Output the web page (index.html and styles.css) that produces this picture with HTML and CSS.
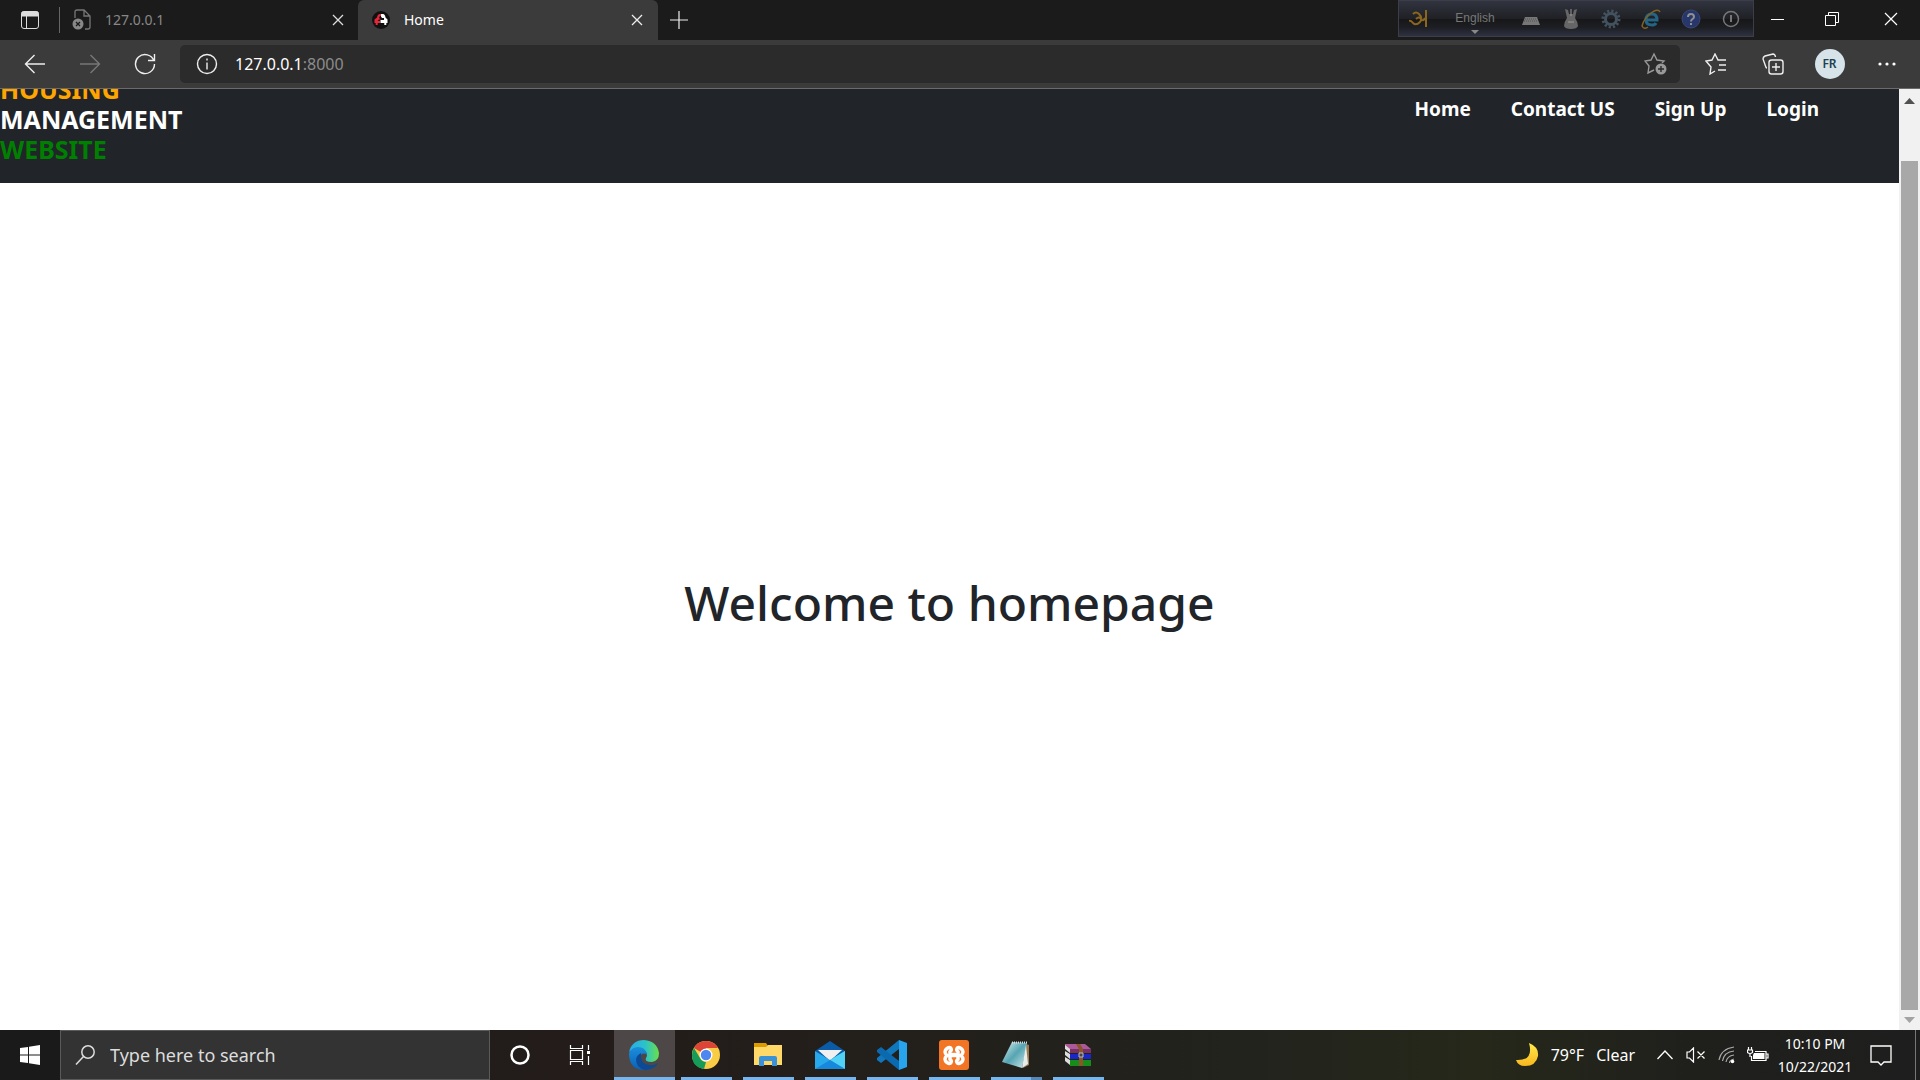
FILE: index.html
```html
<!DOCTYPE html>
<html lang="en">
<head>
<meta charset="utf-8">
<title>Home</title>
<link rel="stylesheet" href="styles.css">
</head>
<body>
<header class="tabstrip">
  <button class="tab-actions" aria-label="Tab actions"><svg width="20" height="20" viewBox="0 0 20 20" fill="none" stroke="#ddd"><rect x="1.5" y="1.5" width="17" height="17" rx="2.500"/><path d="M2 2h16v4H2z" fill="#ddd"/><path d="M6.500 6v12"/></svg></button>
  <div class="tab">
    <svg width="20" height="22" viewBox="0 0 20 22" fill="none" stroke="#777" stroke-width="1.300"><path d="M3 9V3q0-2 2-2h7l6 6v11q0 2-2 2h-3M12 1v6h6"/><circle cx="6" cy="15" r="5.500" fill="#888" stroke="none"/><path d="M4 13l4 4m0-4l-4 4" stroke="#1b1b1b"/></svg>
    <span class="tab-title">127.0.0.1</span>
    <button class="tab-close" aria-label="Close tab"><svg width="12" height="12" viewBox="0 0 12 12" stroke="#ddd" stroke-width="1.300"><path d="M1 1l10 10M11 1L1 11"/></svg></button>
  </div>
  <div class="tab active">
    <svg width="18" height="18" viewBox="0 0 18 18"><circle cx="9" cy="9" r="9" fill="#111"/><path d="M10 3H8Q5.500 3 5 6.500L2.500 8.500V12h1.200v2h2v-2H8v-2H5.500L7 8.500h2L7 7l1-2h2z" fill="#e2283a"/><path d="M9 3h2q2 0 2.500 3.500l2 2V12h-1.200v2h-2v-2H8.500v-3H12V7h-2L9 5.500z" fill="#fff"/></svg>
    <span class="tab-title">Home</span>
    <button class="tab-close" aria-label="Close tab"><svg width="12" height="12" viewBox="0 0 12 12" stroke="#eee" stroke-width="1.300"><path d="M1 1l10 10M11 1L1 11"/></svg></button>
  </div>
  <button class="new-tab" aria-label="New tab"><svg width="18" height="18" viewBox="0 0 18 18" stroke="#eee" stroke-width="1.200"><path d="M0 9h18M9 0v18"/></svg></button>
  <div class="langbar">
    <button aria-label="Keyboard"><svg width="20" height="20" viewBox="0 0 20 20" fill="none" stroke="#8a661e" stroke-width="2"><path d="M4 5q3-3 6 0 4 4 1 8-4 4-7 1-2-3-4-2M7 10q3-3 5 0t4-1M17 1v17"/></svg></button>
    <button class="lang">English<svg width="8" height="4" viewBox="0 0 8 4" fill="#888"><path d="M0 0h8L4 4z"/></svg></button>
    <button aria-label="Layout"><svg width="20" height="20" viewBox="0 0 20 20"><path d="M4 8h12l3 8H1z" fill="#777"/><path d="M4 10h12M3 12h14" stroke="#555" stroke-dasharray="1 1"/></svg></button>
    <button aria-label="Mouse"><svg width="20" height="22" viewBox="0 0 20 22" fill="#666"><path d="M4 1l3 1 1 4h4l1-4 3-1-2 9q3 4 3 8-1 3-7 3t-7-3q0-4 3-8z"/><path d="M10 1v7M7 14h6" stroke="#999"/></svg></button>
    <button aria-label="Settings"><svg width="20" height="20" viewBox="0 0 20 20" fill="none" stroke="#43525f"><circle cx="10" cy="10" r="8" stroke-width="3" stroke-dasharray="2.200 1.990"/><circle cx="10" cy="10" r="5.500" stroke-width="3"/></svg></button>
    <button aria-label="Web"><svg width="20" height="20" viewBox="0 0 20 20" fill="none"><path d="M5 11h11q0-6-5-6-6 0-6 6 0 5 6 5 3 0 4-2" stroke="#246485" stroke-width="3"/><path d="M19 3q-2-4-9 1T1 17q2 4 6 1" stroke="#806224" stroke-width="1.500"/></svg></button>
    <button aria-label="Help"><svg width="20" height="20" viewBox="0 0 20 20" fill="none"><circle cx="10" cy="10" r="9" fill="#27366b" stroke="#3d4870"/><path d="M7 8q0-3 3-3t3 3q0 1-1.500 2T10 12.500M10 14v2" stroke="#909090" stroke-width="2"/></svg></button>
    <button aria-label="Exit"><svg width="18" height="18" viewBox="0 0 18 18" fill="none" stroke="#777" stroke-width="1.500"><circle cx="9" cy="9" r="7.500"/><path d="M9 5v7" stroke-width="2"/></svg></button>
  </div>
  <div class="window-controls">
    <button aria-label="Minimize"><svg width="14" height="14" viewBox="0 0 14 14" stroke="#fff"><path d="M0 7.500h13"/></svg></button>
    <button aria-label="Restore"><svg width="14" height="14" viewBox="0 0 14 14" fill="none" stroke="#fff"><path d="M.5 3.500h10v10H.5zM3.500 3V.5h10v10H11"/></svg></button>
    <button aria-label="Close"><svg width="14" height="14" viewBox="0 0 14 14" stroke="#fff" stroke-width="1.200"><path d="M1 1l12 12M13 1L1 13"/></svg></button>
  </div>
</header>
<div class="toolbar">
  <div class="nav-buttons">
    <button aria-label="Back"><svg width="22" height="20" viewBox="0 0 22 20" fill="none" stroke="#eee" stroke-width="1.400"><path d="M21 10H1.500M10.500 1l-9 9 9 9"/></svg></button>
    <button aria-label="Forward"><svg width="22" height="20" viewBox="0 0 22 20" fill="none" stroke="#777" stroke-width="1.400"><path d="M1 10h19.500M11.500 1l9 9-9 9"/></svg></button>
    <button aria-label="Refresh"><svg width="22" height="22" viewBox="0 0 22 22" fill="none" stroke="#eee" stroke-width="1.400"><path d="M20 8a9.500 9.500 0 1 0 .5 3M20.500 1v6.500H14"/></svg></button>
  </div>
  <div class="address">
    <svg width="22" height="22" viewBox="0 0 22 22" fill="none" stroke="#eee" stroke-width="1.400"><circle cx="11" cy="11" r="9.500"/><path d="M11 9.500v7M11 5.500v2"/></svg>
    <span class="url">127.0.0.1<span class="port">:8000</span></span>
    <button aria-label="Add favorite"><svg width="24" height="24" viewBox="0 0 24 24" fill="none" stroke="#999" stroke-width="1.400"><path d="M10 18l-6 3 1-7-4-5 6-1 3-6 3 6 7 1-2 2"/><circle cx="17" cy="17" r="5.500" fill="#999" stroke="none"/><path d="M17 14v6M14 17h6" stroke="#2b2b2b"/></svg></button>
  </div>
  <div class="toolbar-actions">
    <button aria-label="Favorites"><svg width="22" height="22" viewBox="0 0 22 22" fill="none" stroke="#eee" stroke-width="1.400"><path d="M10 18l-5 3 1-7-5-6 6-1 3-6 3 6h8M14 12h7M13 17h8"/></svg></button>
    <button aria-label="Collections"><svg width="22" height="22" viewBox="0 0 22 22" fill="none" stroke="#eee" stroke-width="1.400"><path d="M5 15q-1 0-1.500-2L1 6q0-2 2-3l8-2q2 0 2.500 3"/><rect x="7" y="7" width="14" height="14" rx="2.500"/><path d="M14 10v8M10 14h8"/></svg></button>
    <button aria-label="Profile"><span class="avatar">FR</span></button>
    <button aria-label="More"><svg width="18" height="4" viewBox="0 0 18 4" fill="#fff"><circle cx="2" cy="2" r="1.600"/><circle cx="9" cy="2" r="1.600"/><circle cx="16" cy="2" r="1.600"/></svg></button>
  </div>
</div>
<div class="viewport">
  <div class="page">
    <nav class="navbar">
      <a class="brand" href="#"><span class="orange">HOUSING</span><span>MANAGEMENT</span><span class="green">WEBSITE</span></a>
      <div class="links"><a href="#">Home</a><a href="#">Contact US</a><a href="#">Sign Up</a><a href="#">Login</a></div>
    </nav>
    <main class="hero"><h1>Welcome to homepage</h1></main>
  </div>
  <div class="scrollbar">
    <svg width="11" height="6" viewBox="0 0 11 6" fill="#505050"><path d="M0 6h11L5.500 0z"/></svg>
    <div class="thumb"></div>
    <svg width="11" height="6" viewBox="0 0 11 6" fill="#a3a3a3"><path d="M0 0h11L5.500 6z"/></svg>
  </div>
</div>
<footer class="taskbar">
  <button class="start" aria-label="Start"><svg width="20" height="20" viewBox="0 0 20 20" fill="#fff"><path d="M0 3l8-1v7.500H0zM9 1.800L20 0v9.500H9zM0 10.500h8V18l-8-1zM9 10.500h11V20L9 18.300z"/></svg></button>
  <label class="search"><svg width="20" height="20" viewBox="0 0 20 20" fill="none" stroke="#ddd" stroke-width="1.500"><circle cx="13" cy="7" r="6.200"/><path d="M8.500 11.500L1 19.500"/></svg><input type="text" placeholder="Type here to search" aria-label="Search"></label>
  <button class="task" aria-label="Cortana"><svg width="20" height="20" viewBox="0 0 20 20" fill="none" stroke="#fff" stroke-width="2.500"><circle cx="10" cy="10" r="8.500"/></svg></button>
  <button class="task" aria-label="Task view"><svg width="22" height="20" viewBox="0 0 22 20" fill="none" stroke="#fff" stroke-width="1.200"><path d="M1.500 0v3.500h12V0M1.500 5.500h12v9h-12zM1.500 20v-3.500h12V20M19.500 0v5M19.500 11v9"/><path d="M18 6h3v3h-3z" fill="#fff" stroke="none"/></svg></button>
  <div class="apps">
    <button class="app current" aria-label="Edge"><svg width="30" height="30" viewBox="0 0 30 30"><defs><linearGradient id="eg"><stop stop-color="#2aa9e8"/><stop offset=".55" stop-color="#2cc3c8"/><stop offset="1" stop-color="#6be048"/></linearGradient><linearGradient id="eb" x2="0" y2="1"><stop stop-color="#1b8fdc"/><stop offset="1" stop-color="#0a61b5"/></linearGradient></defs><path d="M0 12Q3 0 15 0q13 1 15 13 0 8-7 9-8 0-6-4 3-5-3-9-7-3-14 3z" fill="url(#eg)"/><path d="M0 13Q3 7 9 7q7 0 9 7-6-2-7 3-1 9 9 12-3 1-6 1Q0 29 0 13z" fill="url(#eb)"/><path d="M12 13q-1 11 8 12 5 1 9-2-4 7-13 7-9-2-9-11 1-4 5-6z" fill="#0c4a95"/></svg></button>
    <button class="app" aria-label="Chrome"><svg width="28" height="28" viewBox="0 0 28 28"><circle cx="14" cy="14" r="14" fill="#f9cc45"/><path d="M14 14L2 7Q6 0 14 0q8 0 12 7H14z" fill="#db4437"/><path d="M2 7l6 10q2 4 6 4l-2 7Q0 26 0 14q0-4 2-7z" fill="#169b58"/><circle cx="14" cy="14" r="6.500" fill="#fff"/><circle cx="14" cy="14" r="5.200" fill="#4d87ef"/></svg></button>
    <button class="app" aria-label="File Explorer"><svg width="28" height="24" viewBox="0 0 28 24"><path d="M0 0h12l2 3v5H0z" fill="#dd9b00"/><path d="M0 4h12l2-2h14v20H0z" fill="#ffd868"/><path d="M5 23V15q0-2 2-2h14q2 0 2 2v8h-5v-5h-8v5z" fill="#3a91d6"/></svg></button>
    <button class="app" aria-label="Mail"><svg width="30" height="28" viewBox="0 0 30 28"><path d="M0 10L15 0l15 10-7 6H7z" fill="#0b5aa5"/><path d="M3 9h24L15 20z" fill="#f0f0f0"/><path d="M0 10l15 9 15-9v18H0z" fill="#27a9ec"/><path d="M15 19l15-9v18z" fill="#50d2f7"/><path d="M0 28l15-9 15 9z" fill="#1789dc"/></svg></button>
    <button class="app" aria-label="Visual Studio Code"><svg width="30" height="30" viewBox="0 0 30 30"><path d="M22 0v9L4 23l-4-3V18z" fill="#1177bd"/><path d="M0 10l4-3 18 14v9L0 12z" fill="#0b6aaf"/><path d="M22 0l8 3v24l-8 3z" fill="#27a4ec"/></svg></button>
    <button class="app" aria-label="XAMPP"><svg width="30" height="30" viewBox="0 0 30 30" fill="none"><rect width="30" height="30" rx="3" fill="#f27525"/><path d="M8 8.500q3-2 4 0t-1 3v3h8v-3q-2-1-1-3t4 0q4 3 0 7 4 4 0 7-3 2-4 0t1-3v-4h-8v4q2 1 1 3t-4 0q-4-3 0-7-4-4 0-7z" stroke="#fff" stroke-width="3.500" stroke-linejoin="round"/></svg></button>
    <button class="app grouped" aria-label="Notepad"><svg width="28" height="28" viewBox="0 0 28 28"><defs><linearGradient id="np" x2="1" y2="1"><stop stop-color="#e2f1f2"/><stop offset=".5" stop-color="#55a5b2"/><stop offset="1" stop-color="#d4e9ea"/></linearGradient></defs><path d="M24 3l3 1v20l-6 3z" fill="#9a7950"/><path d="M10 1l15 1-5 25L0 21z" fill="url(#np)"/><path d="M24 4l2 19-6 4z" fill="#e6eeea"/><path d="M10 1.500h15" stroke="#ddd" stroke-width="2" stroke-dasharray="1 1"/></svg></button>
    <button class="app" aria-label="WinRAR"><svg width="28" height="24" viewBox="0 0 28 24"><path d="M1 1h20l6 5v3H6L1 5z" fill="#ad5997"/><path d="M6 6h21v4H6z" fill="#793067"/><path d="M6 11h21v5H6z" fill="#1827c5"/><path d="M6 17h21v6H6z" fill="#168c1b"/><path d="M1 2l5 4v4L1 6zM1 8l5 3v5l-5-4zM1 14l5 3v5l-5-4z" fill="#ddd"/><path d="M12 1h4l3 5v17h-4V6z" fill="#8b5429"/><path d="M15 10h4v4h-4z" fill="#444" stroke="#bbb"/></svg></button>
  </div>
  <div class="tray">
    <button class="weather"><svg width="24" height="24" viewBox="0 0 24 24"><defs><linearGradient id="moon" x2="0" y2="1"><stop stop-color="#ffe94d"/><stop offset="1" stop-color="#f8b71d"/></linearGradient></defs><path d="M14 0q10 4 9 13-2 10-13 10-7 0-9-6 18 1 13-17z" fill="url(#moon)"/></svg><span>79°F</span><span>Clear</span></button>
    <button aria-label="Hidden icons"><svg width="16" height="10" viewBox="0 0 16 10" fill="none" stroke="#fff" stroke-width="1.300"><path d="M.5 9L8 1l7.500 8"/></svg></button>
    <button aria-label="Volume"><svg width="20" height="16" viewBox="0 0 20 16" fill="none" stroke="#fff" stroke-width="1.200"><path d="M1 5h2.500l4-4v14l-4-4H1zM11.500 4.500l7 7m0-7l-7 7"/></svg></button>
    <button aria-label="Network"><svg width="18" height="18" viewBox="0 0 18 18" fill="none" stroke="#aaa" stroke-width="1.200"><path d="M1 14Q3 3 16 1M4.500 15Q6 6 16 5M8 16q1-6 8-7M11.500 17q0-3 4.500-4"/><circle cx="14.500" cy="15.500" r="1.800" fill="#fff" stroke="none"/></svg></button>
    <button aria-label="Battery"><svg width="22" height="16" viewBox="0 0 22 16" fill="none" stroke="#fff" stroke-width="1.200"><path d="M4.500 9v4.500h14.500v-9H8M19 7h2v4h-2M1.500 0v3M4.500 0v3M.5 3h5v2.500q-2.500 2-5 0zM3 7v3"/><path d="M7 6h10.500v6H6V8z" fill="#fff" stroke="none"/></svg></button>
    <button class="clock"><span>10:10 PM</span><span>10/22/2021</span></button>
    <button class="notifications" aria-label="Notifications"><svg width="22" height="22" viewBox="0 0 22 22" fill="none" stroke="#fff" stroke-width="1.300"><path d="M1 2h20v16h-7l-3 3-3-3H1z"/></svg></button>
  </div>
</footer>
</body>
</html>
```
FILE: styles.css
```css
* { box-sizing: border-box; }
body {
  margin: 0;
  height: 100vh;
  display: flex;
  flex-direction: column;
  overflow: hidden;
  font-family: "Noto Sans", "Open Sans", sans-serif;
  color: #fff;
}
button {
  display: flex;
  align-items: center;
  justify-content: center;
  padding: 0;
  border: 0;
  background: none;
  color: inherit;
  font: inherit;
}
svg { flex: none; }
a { color: inherit; text-decoration: none; }

.tabstrip { display: flex; height: 40px; flex: none; background: #1b1b1b; }
.tab-actions { width: 60px; border-right: 1px solid #666; border-image: linear-gradient(transparent 8px, #666 8px, #666 32px, transparent 32px) 1; }
.tab {
  display: flex;
  align-items: center;
  gap: 13px;
  width: 298px;
  padding: 0 14px 0 12px;
  color: #888;
  font-size: 14px;
}
.tab.active { width: 300px; gap: 14px; padding-right: 15px; padding-left: 14px; border-radius: 6px 6px 0 0; background: #3b3b3b; color: #fff; }
.tab-title { flex: 1; padding-bottom: 2px; }
.new-tab { width: 42px; }
.langbar {
  display: flex;
  width: 356px;
  height: 37px;
  margin-left: auto;
  padding-right: 2px;
  border: 1px solid #3b3d48;
  background: linear-gradient(#31343f, #202126 50%, #171717 51%, #1d1e24 75%, #2e3140);
}
.langbar button { width: 40px; }
.langbar .lang { flex: 1; flex-direction: column; gap: 4px; padding-top: 6px; color: #777; font: 12px/16px "Liberation Sans", sans-serif; }
.window-controls { display: flex; width: 166px; }
.window-controls button { flex: 1; height: 37px; }
.window-controls button:first-child { flex: none; width: 48px; }

.toolbar { display: flex; align-items: center; height: 49px; flex: none; background: #3b3b3b; border-bottom: 1px solid #6b6b6b; }
.nav-buttons { display: flex; width: 180px; padding-left: 7px; }
.nav-buttons button { width: 55px; }
.address { flex: 1; display: flex; align-items: center; gap: 17px; height: 38px; padding: 0 12px 0 16px; border-radius: 5px; background: #2b2b2b; font-size: 16px; }
.url { flex: 1; }
.port { color: #8c8c8c; }
.toolbar-actions { display: flex; width: 240px; padding-left: 7px; }
.toolbar-actions button { width: 57px; }
.avatar { width: 30px; height: 30px; border-radius: 50%; background: #d6e4ea; color: #23404c; font-size: 12px; line-height: 30px; font-weight: 600; }

.viewport { flex: 1; min-height: 0; display: flex; background: #fff; }
.page { flex: 1; display: flex; flex-direction: column; }
.navbar { display: flex; justify-content: space-between; align-items: flex-end; height: 94px; overflow: hidden; background: #212529; font-weight: 700; }
.brand { display: flex; flex-direction: column; padding-bottom: 19px; font-size: 25px; line-height: 30px; }
.orange { color: orange; }
.green { color: green; }
.links { display: flex; align-self: flex-start; gap: 40px; padding: 6px 80px 0 0; font-size: 19px; line-height: 28px; }
.hero { flex: 1; display: flex; align-items: center; justify-content: center; color: #212529; }
h1 { margin: 0 0 8px; font-size: 48px; line-height: 60px; font-weight: 500; }
.scrollbar { display: flex; flex-direction: column; align-items: center; gap: 7px; width: 21px; padding: 9px 2px 7px 2px; background: #f1f1f1; }
.thumb { flex: 1; width: 17px; margin-top: 50px; background: #a8a8a8; }

.taskbar { display: flex; height: 50px; flex: none; background: linear-gradient(90deg, #1a1a1a, #231c1a 30%, #231f1b 45%, #22231d 65%, #26281a 77%, #1f201c 88%, #1e1e1e); }
.start { width: 60px; }
.search { display: flex; align-items: center; gap: 15px; width: 430px; padding: 0 14px; border: 1px solid #5a5a5a; background: #333; }
.search input { flex: 1; padding: 0; border: 0; background: none; color: #ddd; font: 18px/24px "Noto Sans", sans-serif; }
.search input::placeholder { color: #ddd; opacity: 1; }
.task { width: 60px; }
.apps { display: flex; padding-left: 4px; }
.app { width: 62px; padding-right: 1px; background: linear-gradient(#76b5ee, #76b5ee) 50% 100% / 51px 3px no-repeat; }
.app.current { width: 61px; background-size: 100% 3px; background-color: #4d4847; }
.app.grouped { background-image: linear-gradient(90deg, #76b5ee 40px, #5688b5 40px); }
.tray { display: flex; margin: 0 4px 0 auto; border-right: 1px solid #777; }
.tray button { width: 31px; }
.tray .weather { width: auto; gap: 12px; margin-right: 14px; font-size: 16px; }
.tray .clock { width: 84px; margin-right: 2px; flex-direction: column; font-size: 14px; line-height: 23px; }
.tray .notifications { width: 56px; padding-right: 12px; }
```
